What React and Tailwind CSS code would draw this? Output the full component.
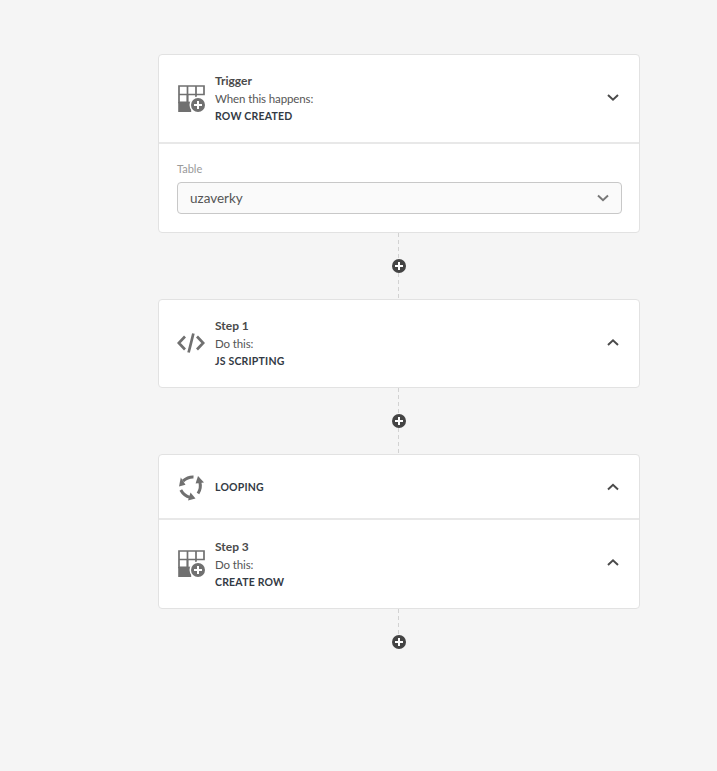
function TableAddIcon() {
    return (
        <svg width="28" height="28" viewBox="0 0 28 28" className="ml-px shrink-0">
            <path d="M1 1h25v8.5H1zM1 9.5h8.5v8H1z" fill="none" stroke="#707070" strokeWidth="1.7" />
            <path d="M9.5 1v16.5M18 1v12" fill="none" stroke="#707070" strokeWidth="1.7" />
            <path d="M17 17.5H1" stroke="#707070" strokeWidth="1.7" />
            <rect x="0.2" y="17" width="13" height="10" fill="#707070" />
            <circle cx="20" cy="20" r="8.5" fill="#fff" />
            <circle cx="20" cy="20" r="7" fill="#707070" />
            <path d="M20 16v8M16 20h8" stroke="#fff" strokeWidth="2" />
        </svg>
    )
}

function CodeIcon() {
    return (
        <svg width="28" height="20" viewBox="0 0 28 20" className="-translate-y-px shrink-0">
            <path d="M8 3.5 1.8 10 8 16.5M20 3.5l6.2 6.5-6.2 6.5" fill="none" stroke="#707070" strokeWidth="2.7" />
            <path d="M16.4 .5 11.6 19.5" fill="none" stroke="#707070" strokeWidth="2.7" />
        </svg>
    )
}

function LoopIcon() {
    return (
        <svg width="28" height="28" viewBox="0 0 28 28" className="shrink-0">
            <g fill="none" stroke="#707070" strokeWidth="3">
                <path d="M16.5 4C12.5 3.8 9 5.4 6 8" />
                <path d="M22.8 9C24 13 23.2 17 21 20.5" />
                <path d="M3.8 17C6 21 9 23.4 13 24.4" />
            </g>
            <path d="M8.5 11.8 3.8 4.4 2 13.4z" fill="#707070" />
            <path d="M21 3 27 9.4 18.6 10.6z" fill="#707070" />
            <path d="M13.5 19.5 18.5 25.5 11 27.5z" fill="#707070" />
        </svg>
    )
}

function Chevron({ up, color = "#4a4a4a", className }) {
    return (
        <svg width="12" height="8" viewBox="0 0 12 8" className={`shrink-0 ${className}`}>
            <path d={up ? "M1 6.4 6 1.8l5 4.6" : "M1 1.6 6 6.2l5-4.6"} fill="none" stroke={color} strokeWidth="2" />
        </svg>
    )
}

function DashedLine() {
    return (
        <div className="mr-px w-px flex-1 bg-[repeating-linear-gradient(to_bottom,#d2d2d2_0,#d2d2d2_4px,transparent_4px,transparent_7px)]" />
    )
}

function Connector({ className }) {
    return (
        <div className={`flex flex-col items-center ${className}`}>
            <DashedLine />
            <div className="grid h-[14px] w-[14px] place-items-center rounded-full bg-[#444444]">
                <svg width="10" height="10" viewBox="0 0 10 10">
                    <path d="M5 1v8M1 5h8" stroke="#fff" strokeWidth="2" />
                </svg>
            </div>
            <DashedLine />
        </div>
    )
}

function BlockHeader({ icon, title, subtitle, name, up, className, chevronClass = "-translate-y-[1.5px]" }) {
    return (
        <div className={`flex items-center pl-[18px] pr-[20px] ${className}`}>
            <div className="flex w-[38px] justify-start">{icon}</div>
            <div className="flex-1">
                {title && <div className="text-[12px] leading-[18px] font-bold text-[#4a4a4a]">{title}</div>}
                {subtitle && <div className="text-[11.5px] leading-[17px] tracking-[-0.01em] text-[#555555]">{subtitle}</div>}
                <div className="text-[10.5px] leading-[18px] font-bold tracking-[0.02em] text-[#333a44]">{name}</div>
            </div>
            <Chevron up={up} className={chevronClass} />
        </div>
    )
}

export default function App() {
    return (
        <div className="min-h-[771px] bg-[#f5f5f5] pt-[54px] pl-[158px] font-['Lato',sans-serif]">
            <div className="w-[482px]">
                <div className="rounded border border-[#e2e2e2] bg-white">
                    <BlockHeader
                        icon={<TableAddIcon />}
                        title="Trigger"
                        subtitle="When this happens:"
                        name="ROW CREATED"
                        className="h-[87px]"
                    />
                    <div className="border-t-2 border-[#e8e8e8] pt-[18px] pr-[17px] pb-[18px] pl-[18px]">
                        <label className="block text-[11px] leading-[14px] text-[#9a9a9a]">Table</label>
                        <div className="mt-[6px] flex h-[32px] items-center justify-between rounded border border-[#c8c8c8] bg-[#fafafa] pr-3 pl-3">
                            <span className="text-[13.5px] text-[#555555]">uzaverky</span>
                            <Chevron color="#777777" />
                        </div>
                    </div>
                </div>

                <Connector className="h-[66px]" />

                <div className="rounded border border-[#e2e2e2] bg-white">
                    <BlockHeader
                        icon={<CodeIcon />}
                        title="Step 1"
                        subtitle="Do this:"
                        name="JS SCRIPTING"
                        up
                        className="h-[87px]"
                    />
                </div>

                <Connector className="h-[66px]" />

                <div className="rounded border border-[#e2e2e2] bg-white">
                    <BlockHeader icon={<LoopIcon />} name="LOOPING" up chevronClass="" className="h-[63px]" />
                    <BlockHeader
                        icon={<TableAddIcon />}
                        title="Step 3"
                        subtitle="Do this:"
                        name="CREATE ROW"
                        up
                        className="h-[90px] border-t-2 border-[#e8e8e8]"
                    />
                </div>

                <Connector className="h-[66px] [&>div:last-child]:invisible" />
            </div>
        </div>
    )
}
